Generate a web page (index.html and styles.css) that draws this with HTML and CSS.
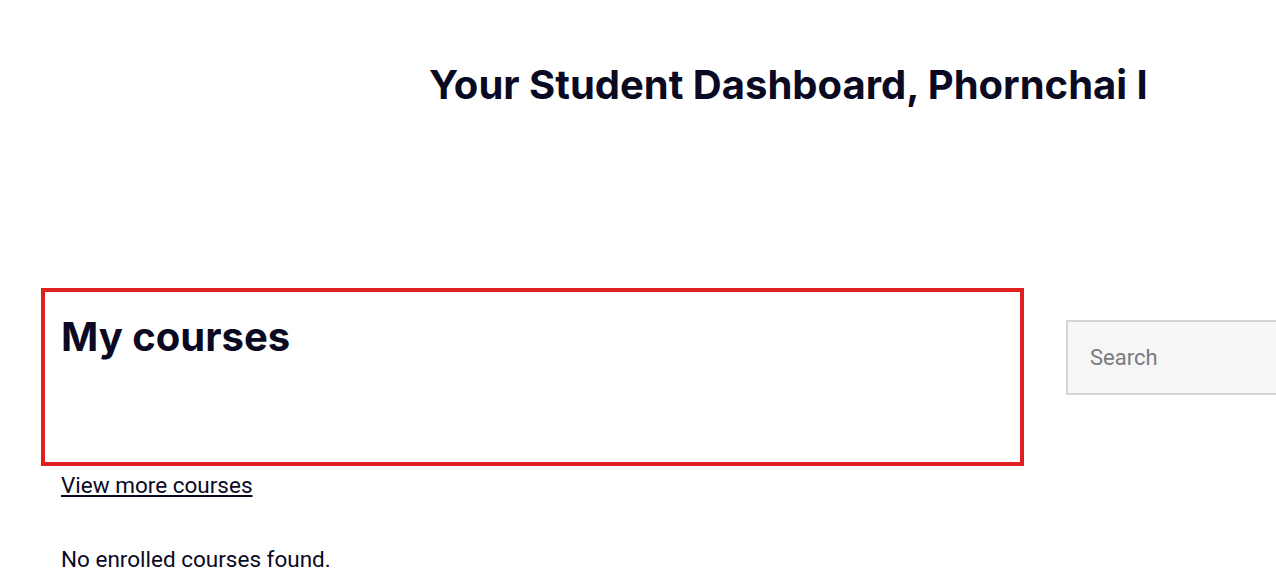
FILE: index.html
```html
<!doctype html>
<html lang="en">
<head>
    <meta charset="utf-8">
    <title>Student Dashboard</title>
    <link rel="stylesheet" href="styles.css">
</head>
<body>

<header class="dashboard-header">
    <h1>Your Student Dashboard, Phornchai I</h1>
</header>

<main class="dashboard">
    <section class="courses">
        <div class="courses-box">
            <h2>My courses</h2>
        </div>
        <div class="courses-footer">
            <a href="#">View more courses</a>
            <p>No enrolled courses found.</p>
        </div>
    </section>

    <aside class="sidebar">
        <input class="search-input" type="text" placeholder="Search">
    </aside>
</main>

</body>
</html>
```

FILE: styles.css
```css
body {
    margin: 0;
    font-family: Roboto, "Liberation Sans", sans-serif;
    color: #0a0a1f;
    background-color: #ffffff;
    overflow: hidden;
}

.dashboard-header {
    padding: 60px 0 0 429px;
    height: 288px;
    box-sizing: border-box;
}

.dashboard-header h1 {
    margin: 0;
    font-family: Inter, "Noto Sans", sans-serif;
    font-size: 40px;
    font-weight: 700;
    color: #0a0a23;
    white-space: nowrap;
}

.dashboard {
    display: flex;
    align-items: flex-start;
    gap: 42px;
    padding-left: 41px;
}

.courses {
    flex: 0 0 983px;
}

.courses-box {
    border: 4px solid #e0201f;
    height: 178px;
    box-sizing: border-box;
    padding: 20px 16px 16px;
}

.courses-box h2 {
    margin: 0;
    font-family: Inter, "Noto Sans", sans-serif;
    font-size: 40px;
    font-weight: 700;
    color: #0a0a23;
}

.courses-footer {
    padding: 6px 20px;
    font-size: 22.5px;
}

.courses-footer a {
    color: #0a0a1f;
    text-decoration: underline;
}

.courses-footer p {
    margin: 48px 0 0;
}

.sidebar {
    flex: 0 0 320px;
    margin-top: 32px;
}

.search-input {
    width: 100%;
    height: 75px;
    box-sizing: border-box;
    border: 2px solid #d4d4d4;
    background-color: #f6f6f6;
    padding: 0 22px;
    font-family: Roboto, "Liberation Sans", sans-serif;
    font-size: 22px;
    color: #333;
}

.search-input::placeholder {
    color: #7a7a80;
}
```
